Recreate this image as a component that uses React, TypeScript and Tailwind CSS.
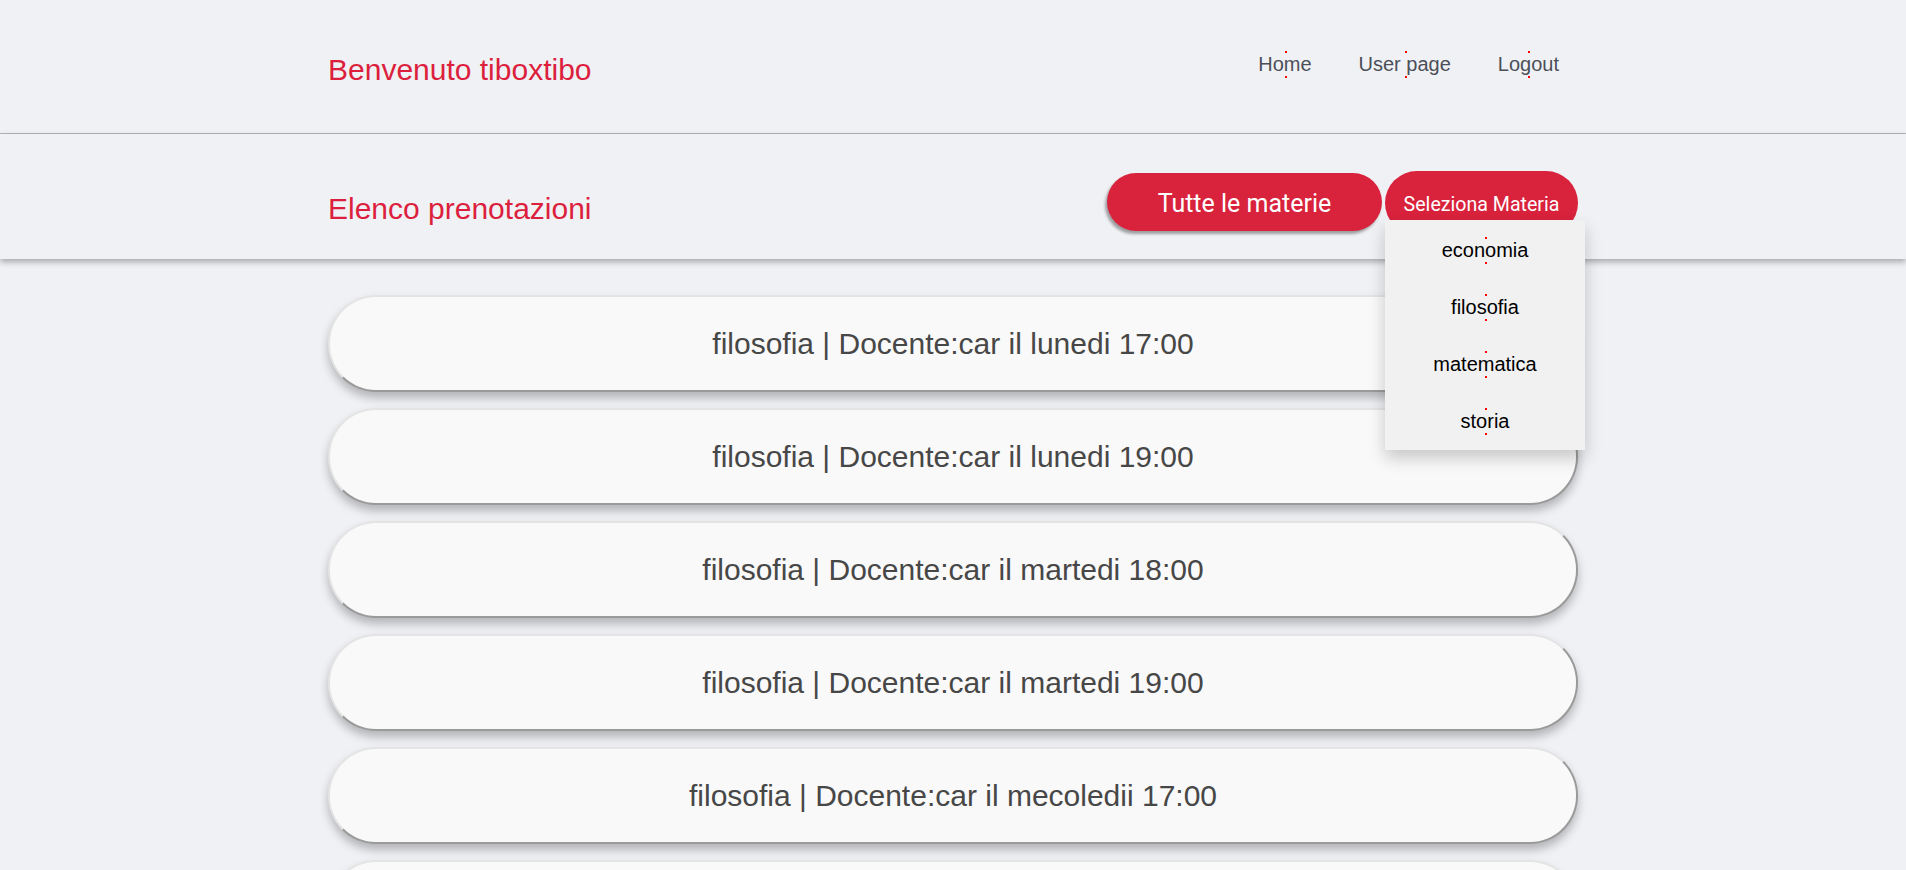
import React from "react";

const Dots = () => (
  <>
    <span className="absolute left-1/2 -top-[2px] h-[2px] w-[2px] bg-[#ff0000]" />
    <span className="absolute left-1/2 -bottom-[2px] h-[2px] w-[2px] bg-[#ff0000]" />
  </>
);

const items = [
  "filosofia | Docente:car il lunedi 17:00",
  "filosofia | Docente:car il lunedi 19:00",
  "filosofia | Docente:car il martedi 18:00",
  "filosofia | Docente:car il martedi 19:00",
  "filosofia | Docente:car il mecoledii 17:00",
  "filosofia | Docente:car il mecoledii 18:00",
];

const materie = ["economia", "filosofia", "matematica", "storia"];

export default function App() {
  return (
    <div className="min-h-screen bg-[#f0f1f5] font-['Liberation_Sans',Arial,sans-serif]">
      <header className="h-[134px] border-b border-[#b5b5b9]">
        <div className="mx-auto flex max-w-[1250px] items-start justify-between pt-[53px]">
          <h1 className="mt-[2px] text-[30px] leading-none text-[#dc1f3d]">Benvenuto tiboxtibo</h1>
          <nav className="flex gap-[47px] pr-[19px]">
            {["Home", "User page", "Logout"].map((l) => (
              <a key={l} className="relative text-[20px] leading-[23px] text-[#4b4f58]">
                {l}
                <Dots />
              </a>
            ))}
          </nav>
        </div>
      </header>

      <section className="relative z-10 h-[125px] bg-[#f0f1f5] shadow-[0_3px_6px_rgba(0,0,0,0.3)]">
        <div className="mx-auto flex max-w-[1250px] items-start justify-between">
          <h2 className="mt-[60px] text-[30px] leading-none text-[#dc1f3d]">Elenco prenotazioni</h2>
          <div className="mt-[37px] flex items-start gap-[3px]">
            <button className="mt-[2px] h-[58px] w-[275px] rounded-full bg-[#d9223c] pt-[3px] font-['Roboto',sans-serif] text-[25px] text-white shadow-[-2px_3px_3px_rgba(0,0,0,0.35)]">
              Tutte le materie
            </button>
            <div className="relative">
              <button className="h-[64px] w-[193px] rounded-full bg-[#d9223c] pt-[3px] font-['Roboto',sans-serif] text-[19.6px] text-white">
                Seleziona Materia
              </button>
              <div className="absolute left-0 top-[49px] z-20 w-[200px] bg-[#f1f1f1] pt-[2px] shadow-[0_8px_16px_rgba(0,0,0,0.2)]">
                {materie.map((m) => (
                  <div key={m} className="flex h-[57px] items-center justify-center">
                    <span className="relative text-[20px] leading-[23px] text-black">
                      {m}
                      <Dots />
                    </span>
                  </div>
                ))}
              </div>
            </div>
          </div>
        </div>
      </section>

      <main className="mx-auto flex max-w-[1250px] flex-col gap-[16px] pt-[36px] pb-[40px]">
        {items.map((t, i) => (
          <div
            key={i}
            className="flex h-[97px] items-center justify-center rounded-[48px] border-2 border-t-[#e4e4e4] border-l-[#e4e4e4] border-r-[#9a9a9a] border-b-[#9a9a9a] bg-[#f9f9f9] text-[30px] text-[#474747] shadow-[0_6px_10px_rgba(0,0,0,0.25)]"
          >
            {t}
          </div>
        ))}
      </main>
    </div>
  );
}
